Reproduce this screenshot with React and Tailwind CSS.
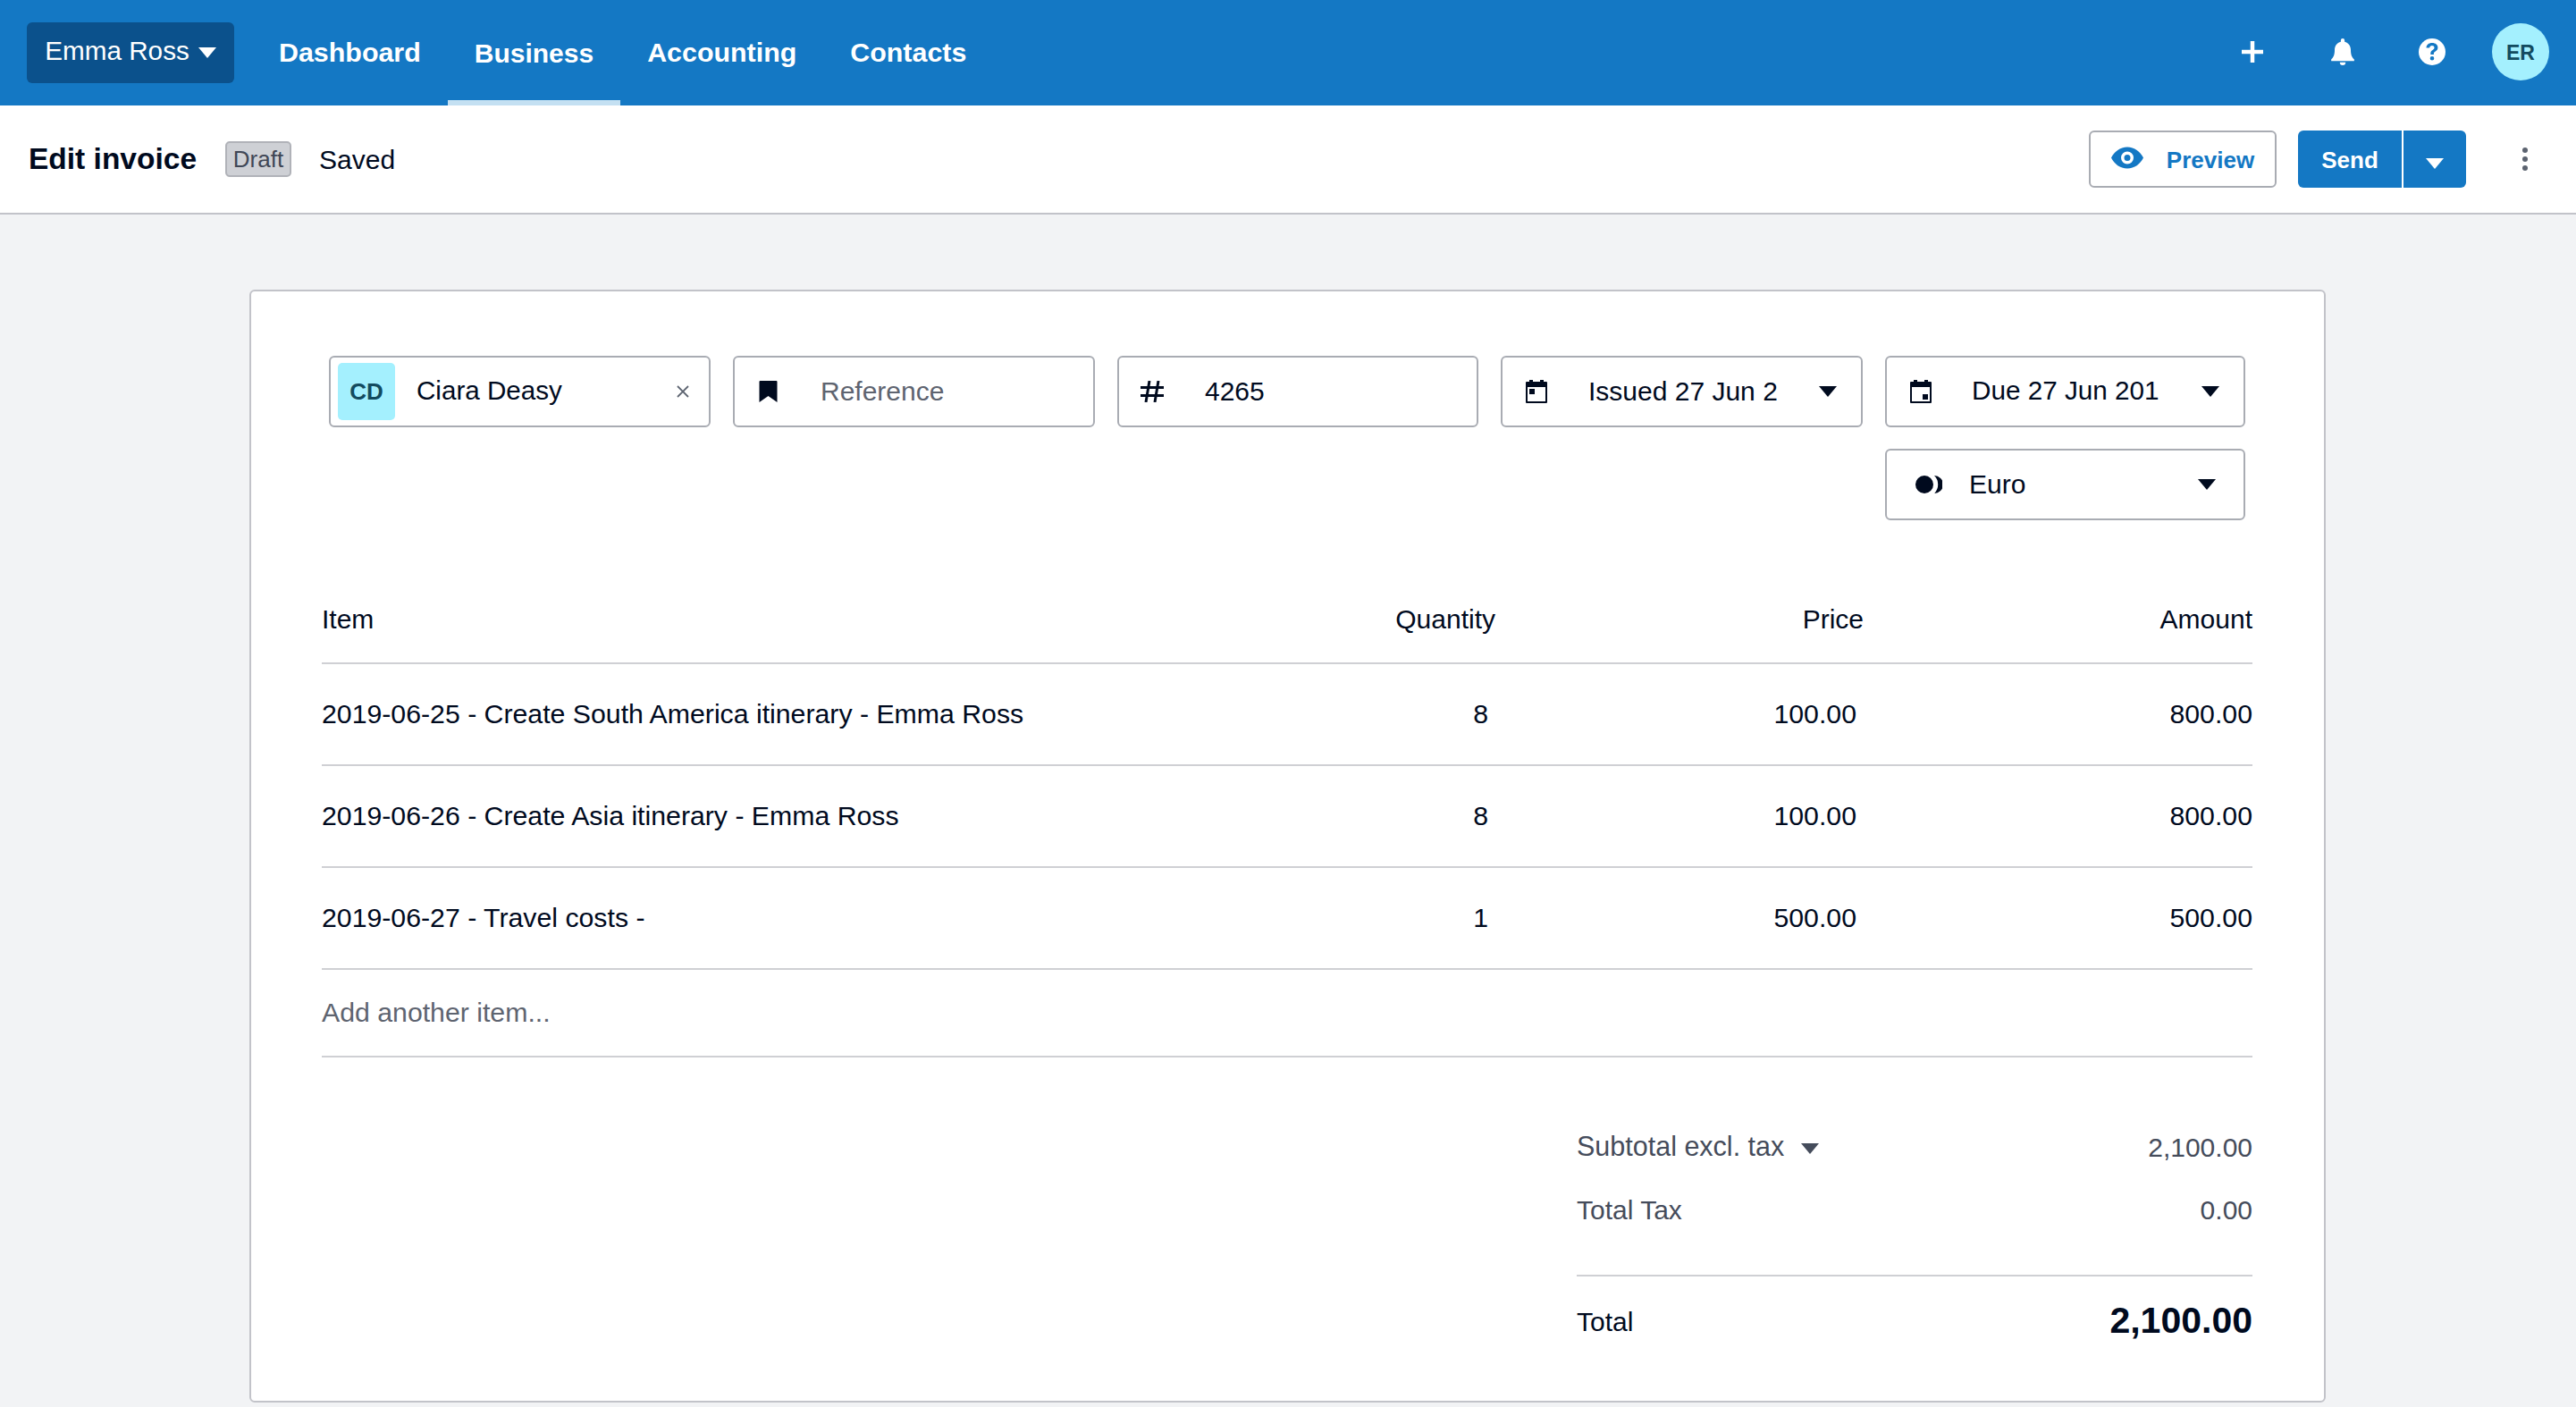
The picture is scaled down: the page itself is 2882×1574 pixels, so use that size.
const font = { fontFamily: '"Liberation Sans", Arial, sans-serif' }

// small solid triangle used on every dropdown
const Caret = ({ className = '' }) => (
  <svg viewBox="0 0 10 6" className={`w-[20px] h-[12px] ${className}`} fill="currentColor">
    <path d="M0 0h10L5 6z" />
  </svg>
)

const CalendarIcon = ({ due }) => (
  <svg viewBox="0 0 24 26" className="w-[24px] h-[26px] text-[#000a1e]" fill="currentColor">
    <path d="M4 0h4v2h8V0h4v2h3a1 1 0 0 1 1 1v22a1 1 0 0 1-1 1H1a1 1 0 0 1-1-1V3a1 1 0 0 1 1-1h3zM2 8v16h20V8z" />
    {due ? <rect x="14" y="16" width="6" height="6" /> : <rect x="4" y="10" width="6" height="6" />}
  </svg>
)

const rows = [
  ['2019-06-25 - Create South America itinerary - Emma Ross', '8', '100.00', '800.00'],
  ['2019-06-26 - Create Asia itinerary - Emma Ross', '8', '100.00', '800.00'],
  ['2019-06-27 - Travel costs -', '1', '500.00', '500.00'],
]

const box = 'h-[80px] rounded-[6px] border-2 border-[#a9acb3] bg-white flex items-center'
const navLink = 'h-full px-[30px] flex items-center border-y-[6px] border-transparent'

export default function App() {
  return (
    <div className="w-[2882px] h-[1574px] overflow-hidden bg-[#f2f3f5] text-[#000a1e] text-[30px]" style={font}>
      {/* Top nav */}
      <div className="h-[118px] bg-[#1478c4] flex items-center pl-[30px] pr-[30px] text-white">
        <button className="w-[232px] h-[68px] rounded-[6px] bg-[#0b518c] flex items-center justify-center gap-[10px] text-[29.7px]">
          <span className="pb-[4px]">Emma Ross</span>
          <Caret />
        </button>
        <nav className="flex h-full ml-[20px] font-bold text-[30.4px]">
          <a className={navLink}>Dashboard</a>
          <a className="h-full px-[30px] flex items-center border-y-[6px] border-t-transparent border-b-[#c4e0f2] text-[30px]">Business</a>
          <a className={navLink}>Accounting</a>
          <a className={navLink}>Contacts</a>
        </nav>
        <div className="ml-auto flex items-center pb-[2px]">
          <svg viewBox="0 0 24 24" className="w-[24px] h-[24px]" fill="currentColor">
            <path d="M9.750 0h4.500v9.750H24v4.500h-9.750V24h-4.500v-9.750H0v-4.500h9.750z" />
          </svg>
          <svg viewBox="0 0 24 28" className="w-[26px] h-[30px] ml-[76px]" fill="currentColor">
            <path d="M12 0a2 2 0 0 1 2 2v1.400c4 1 6.400 4.300 6.400 8.600 0 5 1 7.600 3.600 10v1.500H0V22c2.600-2.400 3.600-5 3.600-10 0-4.300 2.400-7.600 6.400-8.600V2a2 2 0 0 1 2-2zM9 25h6a3 3 0 0 1-6 0z" />
          </svg>
          <svg viewBox="0 0 30 30" className="w-[30px] h-[30px] ml-[72px]">
            <circle cx="15" cy="15" r="15" fill="#fff" />
            <path d="M15 5c-3.800 0-6.300 2.100-6.500 5.400h3.700c.1-1.400 1.200-2.300 2.700-2.300s2.600.9 2.600 2.200c0 1.100-.5 1.700-1.900 2.600-1.700 1.100-2.400 2.200-2.300 4.100v.9h3.600V17c0-1.200.4-1.700 1.900-2.600 1.700-1.100 2.600-2.300 2.600-4.200C21.400 7.100 18.900 5 15 5zM15 20a2.300 2.300 0 1 0 0 4.600 2.300 2.300 0 0 0 0-4.600z" fill="#1478c4" />
          </svg>
          <div className="w-[64px] h-[64px] ml-[52px] pt-[3px] rounded-full bg-[#a4f0fe] text-[#134b5f] font-bold text-[23px] flex items-center justify-center">ER</div>
        </div>
      </div>

      {/* Sub header */}
      <div className="h-[122px] bg-white border-b-2 border-[#c2c3c9] flex items-center pl-[32px] pr-[54px]">
        <h1 className="font-bold text-[33.500px]">Edit invoice</h1>
        <span className="ml-[32px] w-[74px] h-[40px] rounded-[5px] bg-[#ced0d5] border-2 border-[#b0b2b8] text-[#404756] text-[26px] flex items-center justify-center">Draft</span>
        <span className="ml-[31px]">Saved</span>
        <div className="ml-auto flex items-center">
          <button className="w-[210px] h-[64px] rounded-[6px] border-2 border-[#a9acb3] bg-white text-[#1478c4] font-bold text-[26px] flex items-center justify-center gap-[26px]">
            <svg viewBox="0 0 36 24" className="w-[36px] h-[25px] -mt-[4px]" fill="currentColor">
              <path fillRule="evenodd" d="M18 0c8 0 14.500 5 18 12-3.500 7-10 12-18 12S3.500 19 0 12C3.500 5 10 0 18 0zm0 5a7 7 0 1 0 0 14 7 7 0 0 0 0-14zm0 3.500a3.500 3.500 0 1 1 0 7 3.500 3.500 0 0 1 0-7z" />
            </svg>
            <span className="pt-[3px]">Preview</span>
          </button>
          <div className="ml-[24px] flex h-[64px] text-white">
            <button className="w-[116px] rounded-l-[6px] bg-[#1478c4] font-bold text-[26px] pt-[2px]">Send</button>
            <button className="w-[70px] ml-[2px] rounded-r-[6px] bg-[#1478c4] flex items-center justify-center pt-[10px]"><Caret /></button>
          </div>
          <svg viewBox="0 0 6 26" className="w-[6px] h-[26px] ml-[63px] text-[#5c6370]" fill="currentColor">
            <circle cx="3" cy="3" r="3" /><circle cx="3" cy="13" r="3" /><circle cx="3" cy="23" r="3" />
          </svg>
        </div>
      </div>

      {/* Invoice card */}
      <div className="ml-[279px] mt-[84px] w-[2323px] h-[1245px] bg-white border-2 border-[#c2c3c9] rounded-[6px] pt-[72px] pl-[79px] pr-[80px]">
        <div className="grid grid-cols-[427px_405px_404px_405px_403px] gap-x-[25px] gap-y-[24px] ml-[8px]">
          <div className={`${box} pl-[8px] pr-[22px]`}>
            <div className="w-[64px] h-[64px] rounded-[5px] bg-[#a4f0fe] text-[#134b5f] font-bold text-[26px] flex items-center justify-center">CD</div>
            <span className="ml-[24px] pb-[2px] text-[29.600px]">Ciara Deasy</span>
            <svg viewBox="0 0 14 14" className="ml-auto w-[14px] h-[14px] text-[#5c6370]" stroke="currentColor" strokeWidth="1.800"><path d="M1 1l12 12M13 1L1 13" /></svg>
          </div>
          <div className={`${box} pl-[27px]`}>
            <svg viewBox="0 0 20 24" className="w-[21px] h-[24px]" fill="#000a1e"><path d="M1 0h18a1 1 0 0 1 1 1v23l-10-7-10 7V1a1 1 0 0 1 1-1z" /></svg>
            <span className="ml-[48px] pb-[2px] text-[#5e6470]">Reference</span>
          </div>
          <div className={`${box} pl-[24px]`}>
            <svg viewBox="0 0 26 24" className="w-[26px] h-[24px]" stroke="#000a1e" strokeWidth="3" fill="none">
              <path d="M10 0L6 24M20 0l-4 24M0 7.500h26M0 16.500h26" />
            </svg>
            <span className="ml-[46px] pb-[2px]">4265</span>
          </div>
          <div className={`${box} pl-[26px] pr-[27px]`}>
            <CalendarIcon />
            <span className="ml-[46px] pb-[2px]">Issued 27 Jun 2</span>
            <Caret className="ml-auto" />
          </div>
          <div className={`${box} pl-[26px] pr-[27px]`}>
            <CalendarIcon due />
            <span className="ml-[45px] pb-[2px] text-[29.700px]">Due 27 Jun 201</span>
            <Caret className="ml-auto" />
          </div>
          <div className={`${box} col-start-5 pl-[32px] pr-[31px]`}>
            <svg viewBox="0 0 30 20" className="w-[30px] h-[20px]" fill="#000a1e">
              <circle cx="10" cy="10" r="10" />
              <path d="M21 0a10 10 0 0 1 0 20 14 14 0 0 0 0-20z" />
            </svg>
            <span className="ml-[30px] pb-[2px]">Euro</span>
            <Caret className="ml-auto" />
          </div>
        </div>

        {/* Line items */}
        <div className="mt-[81px]">
          <div className="h-[80px] grid grid-cols-[1140px_173px_412px_435px] items-center border-b-2 border-[#cfd0d4] pb-[19px]">
            <span>Item</span>
            <span className="text-right">Quantity</span>
            <span className="text-right">Price</span>
            <span className="text-right">Amount</span>
          </div>
          {rows.map((r) => (
            <div key={r[0]} className="h-[114px] grid grid-cols-[1140px_173px_412px_435px] items-center border-b-2 border-[#cfd0d4] text-[30.250px]">
              <span>{r[0]}</span>
              <span className="text-right pr-[8px]">{r[1]}</span>
              <span className="text-right pr-[8px]">{r[2]}</span>
              <span className="text-right">{r[3]}</span>
            </div>
          ))}
          <div className="h-[98px] flex items-center border-b-2 border-[#cfd0d4] text-[#5e6470] text-[30.250px]">Add another item...</div>
        </div>

        {/* Totals */}
        <div className="ml-auto w-[756px] mt-[65px] text-[#454c5b]">
          <div className="h-[70px] flex items-center justify-between">
            <span className="flex items-center text-[30.500px]">Subtotal excl. tax<Caret className="ml-[19px] mt-[4px]" /></span>
            <span>2,100.00</span>
          </div>
          <div className="h-[70px] flex items-center justify-between">
            <span>Total Tax</span>
            <span>0.00</span>
          </div>
          <div className="mt-[38px] h-[102px] border-t-2 border-[#cfd0d4] flex items-center justify-between text-[#000a1e]">
            <span>Total</span>
            <span className="font-bold text-[41px]">2,100.00</span>
          </div>
        </div>
      </div>
    </div>
  )
}
